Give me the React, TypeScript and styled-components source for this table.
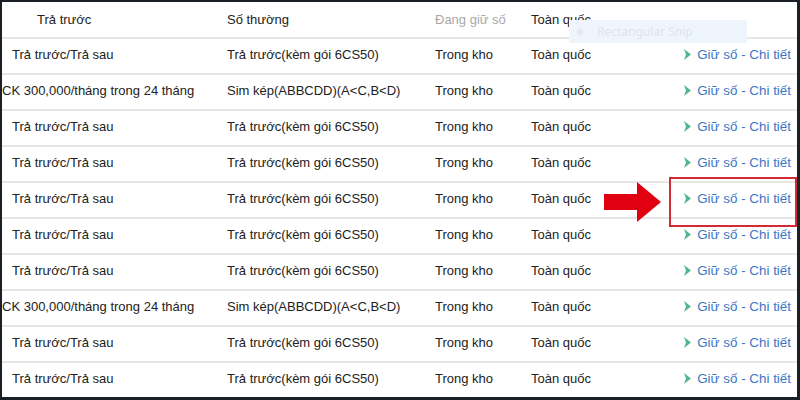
import React from "react";
import styled, { createGlobalStyle } from "styled-components";

const Global = createGlobalStyle`
  html, body { margin: 0; padding: 0; background: #1b2027; }
  body { font-family: "Liberation Sans", Arial, sans-serif; }
`;

const Frame = styled.div`
  width: 800px;
  height: 400px;
  box-sizing: border-box;
  padding: 2px 3px 3px 2px;
  background: #1b2027;
  overflow: hidden;
`;

const Panel = styled.div`
  position: relative;
  width: 100%;
  height: 100%;
  background: #ffffff;
  overflow: hidden;
`;

const Row = styled.div<{ $head?: boolean }>`
  display: grid;
  grid-template-columns: 225px 208px 96px 1fr auto;
  align-items: center;
  box-sizing: border-box;
  height: ${(p) => (p.$head ? 37 : 36)}px;
  padding: 0 6px ${(p) => (p.$head ? 0 : 3)}px 0;
  border-bottom: 2px solid #e6e6e6;
  font-size: 13px;
  color: #222;
  white-space: nowrap;
`;

const Cell = styled.div<{ $indent?: number; $muted?: boolean }>`
  padding-left: ${(p) => p.$indent ?? 0}px;
  color: ${(p) => (p.$muted ? "#a9a9a9" : "#222")};
`;

const Link = styled.a`
  display: flex;
  align-items: center;
  gap: 6px;
  color: #3b78c2;
  text-decoration: none;
  font-size: 13.4px;
`;

const Snip = styled.div`
  position: absolute;
  left: 567px;
  top: 18px;
  width: 178px;
  height: 23px;
  background: #eef5fc;
  display: flex;
  align-items: center;
  gap: 14px;
  padding-left: 8px;
  box-sizing: border-box;
  font-family: "Segoe UI", "Noto Sans", sans-serif;
  font-size: 12px;
  color: #dfe5ec;
`;

const Dot = styled.span`
  width: 6px;
  height: 6px;
  border-radius: 50%;
  background: #e4e8ee;
`;

const Pointer = styled.svg`
  position: absolute;
  left: 600px;
  top: 176px;
`;

const Highlight = styled.div`
  position: absolute;
  left: 667px;
  top: 175px;
  width: 128px;
  height: 50px;
  box-sizing: border-box;
  border: 2px solid #d42a35;
`;

const Chevron = () => (
  <svg width="7" height="11" viewBox="0 0 7 11">
    <path d="M0 0 L7 5.5 L0 11 L2 5.5 Z" fill="#4fb88e" />
  </svg>
);

type R = { a: string; b: string; wide?: boolean };
const rows: R[] = [
  { a: "Trả trước/Trả sau", b: "Trả trước(kèm gói 6CS50)" },
  { a: "CK 300,000/tháng trong 24 tháng", b: "Sim kép(ABBCDD)(A<C,B<D)", wide: true },
  { a: "Trả trước/Trả sau", b: "Trả trước(kèm gói 6CS50)" },
  { a: "Trả trước/Trả sau", b: "Trả trước(kèm gói 6CS50)" },
  { a: "Trả trước/Trả sau", b: "Trả trước(kèm gói 6CS50)" },
  { a: "Trả trước/Trả sau", b: "Trả trước(kèm gói 6CS50)" },
  { a: "Trả trước/Trả sau", b: "Trả trước(kèm gói 6CS50)" },
  { a: "CK 300,000/tháng trong 24 tháng", b: "Sim kép(ABBCDD)(A<C,B<D)", wide: true },
  { a: "Trả trước/Trả sau", b: "Trả trước(kèm gói 6CS50)" },
  { a: "Trả trước/Trả sau", b: "Trả trước(kèm gói 6CS50)" },
];

export default function App() {
  return (
    <>
      <Global />
      <Frame>
        <Panel>
          <Row $head>
            <Cell $indent={35}>Trả trước</Cell>
            <Cell>Số thường</Cell>
            <Cell $muted>Đang giữ số</Cell>
            <Cell>Toàn quốc</Cell>
            <Cell />
          </Row>
          {rows.map((r, i) => (
            <Row key={i}>
              <Cell $indent={r.wide ? 0 : 10}>{r.a}</Cell>
              <Cell>{r.b}</Cell>
              <Cell>Trong kho</Cell>
              <Cell>Toàn quốc</Cell>
              <Link href="#">
                <Chevron />
                Giữ số - Chi tiết
              </Link>
            </Row>
          ))}
          <Snip>
            <Dot />
            Rectangular Snip
          </Snip>
          <Pointer width="62" height="48" viewBox="0 0 62 48">
            <path d="M2 16 L35 16 L35 4 L59 24 L35 44 L35 32 L2 32 Z" fill="#e0000f" />
          </Pointer>
          <Highlight />
        </Panel>
      </Frame>
    </>
  );
}
